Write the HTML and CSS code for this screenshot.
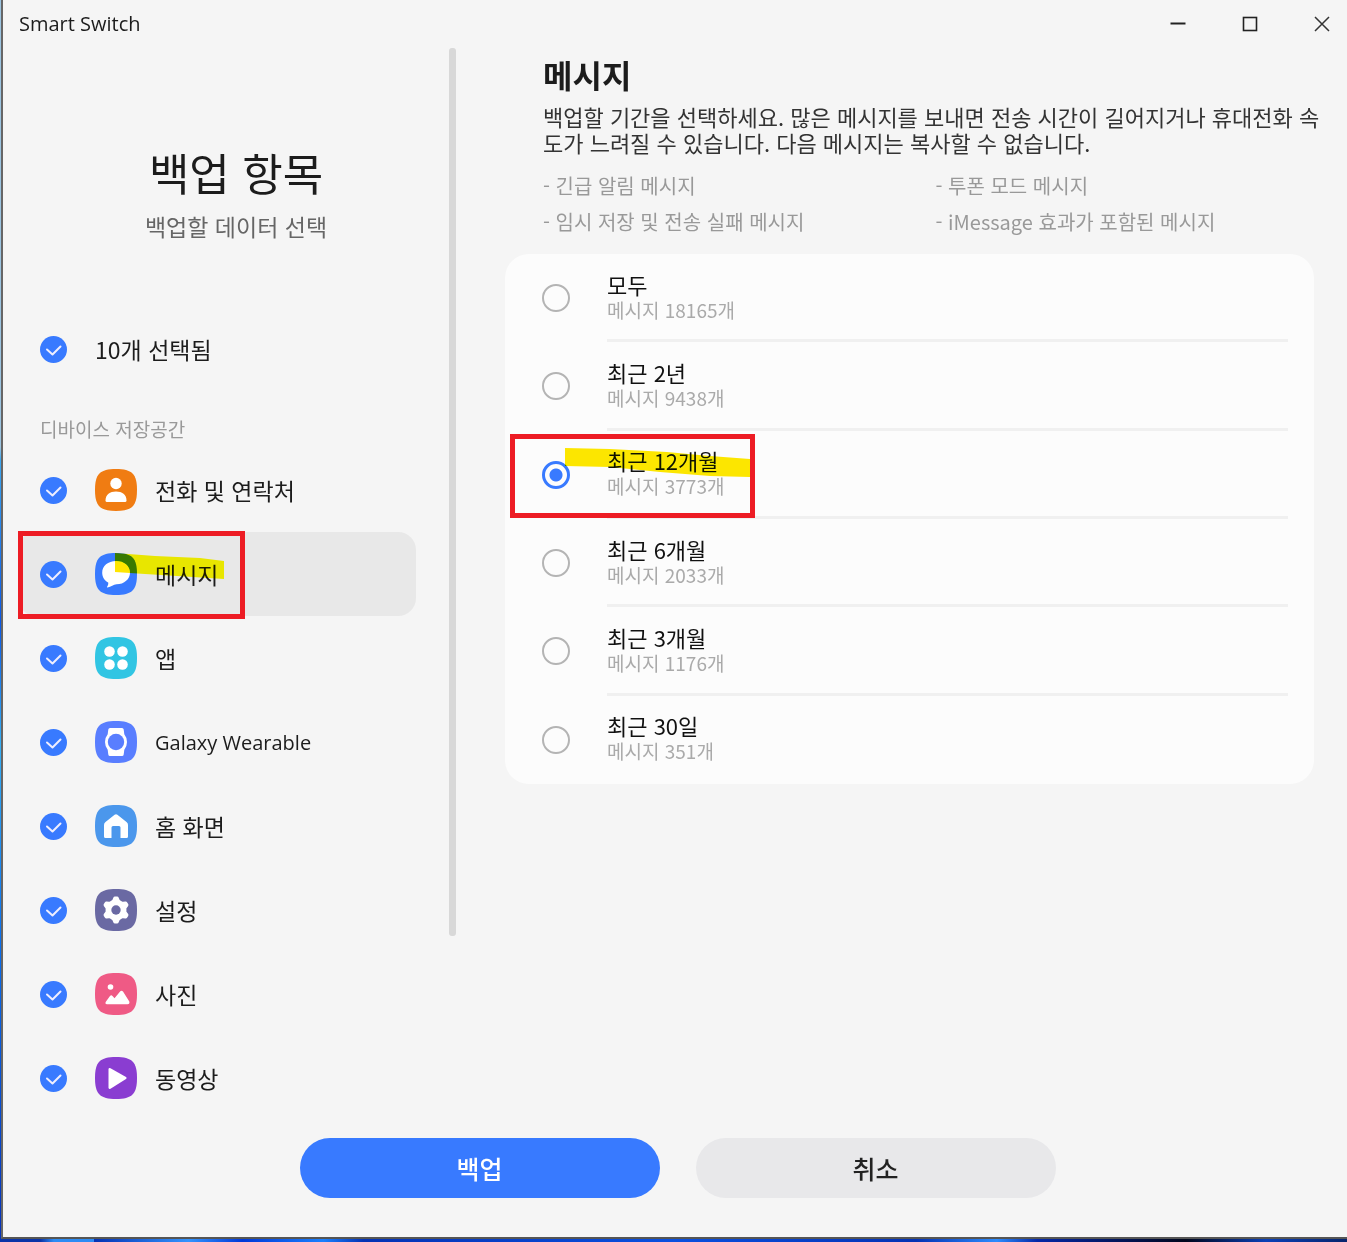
FILE: index.html
```html
<!DOCTYPE html>
<html lang="ko">
<head>
    <meta charset="UTF-8">
    <meta name="viewport" content="width=device-width, initial-scale=1.0">
    <title>Smart Switch</title>
    <link rel="stylesheet" href="styles.css">
</head>
<body>
    <div class="window">
        <header class="title-bar">
            <span class="app-name">Smart Switch</span>
            <div class="window-buttons">
                <button type="button" aria-label="최소화">
                    <svg width="16" height="16" viewBox="0 0 16 16"><path d="M0.5 7.5h15" stroke="#222" stroke-width="2"/></svg>
                </button>
                <button type="button" aria-label="최대화">
                    <svg width="16" height="16" viewBox="0 0 16 16"><rect x="1.5" y="1.5" width="13" height="13" fill="none" stroke="#222" stroke-width="1.6"/></svg>
                </button>
                <button type="button" aria-label="닫기">
                    <svg width="16" height="16" viewBox="0 0 16 16"><path d="M1 1l14 14M15 1L1 15" stroke="#333" stroke-width="1.5"/></svg>
                </button>
            </div>
        </header>

        <div class="content">
            <!-- Backup items -->
            <aside class="sidebar">
                <div class="sidebar-list">
                    <h1>백업 항목</h1>
                    <p class="subtitle">백업할 데이터 선택</p>

                    <label class="item select-all">
                        <input type="checkbox" checked>
                        <span>10개 선택됨</span>
                    </label>

                    <h3>디바이스 저장공간</h3>

                    <label class="item">
                        <input type="checkbox" checked>
                        <svg class="item-icon" viewBox="0 0 42 42">
                            <path class="contacts" d="M21 0C37 0 42 5 42 21S37 42 21 42 0 37 0 21 5 0 21 0Z"/>
                            <circle cx="21" cy="14.5" r="5.7" fill="#fff"/>
                            <path d="M10.5 31.5C10.5 25.500 15 22.500 21 22.500S31.500 25.500 31.500 31.500Q31.500 33 30 33H12Q10.500 33 10.500 31.500Z" fill="#fff"/>
                        </svg>
                        <span>전화 및 연락처</span>
                    </label>

                    <label class="item selected">
                        <input type="checkbox" checked>
                        <svg class="item-icon" viewBox="0 0 42 42">
                            <path class="messages" d="M21 0C37 0 42 5 42 21S37 42 21 42 0 37 0 21 5 0 21 0Z"/>
                            <path d="M21 8C29.200 8 35 12.900 35 19.500S29.200 31.300 21.500 31.300C18.500 31.500 16 33.800 12.500 34.500C12 34.600 11.800 34.200 12.100 33.800C13 32.500 13.500 31 13.200 29.600C9.500 27.500 7.200 24 7.200 19.800C7.200 13 13 8 21 8Z" fill="#fff"/>
                        </svg>
                        <span>메시지</span>
                        <svg class="marker marker-item" viewBox="0 0 109 27" aria-hidden="true"><path d="M0 0L40 3 85 5 109 8V26L62 23 30 21 0 19Z"/></svg>
                        <span class="red-box"></span>
                    </label>

                    <label class="item">
                        <input type="checkbox" checked>
                        <svg class="item-icon" viewBox="0 0 42 42">
                            <path class="apps" d="M21 0C37 0 42 5 42 21S37 42 21 42 0 37 0 21 5 0 21 0Z"/>
                            <g fill="#fff"><circle cx="14.500" cy="14.500" r="5.300"/><circle cx="27.500" cy="14.500" r="5.300"/><circle cx="14.500" cy="27.500" r="5.300"/><circle cx="27.500" cy="27.500" r="5.300"/></g>
                        </svg>
                        <span>앱</span>
                    </label>

                    <label class="item">
                        <input type="checkbox" checked>
                        <svg class="item-icon" viewBox="0 0 42 42">
                            <path class="wearable" d="M21 0C37 0 42 5 42 21S37 42 21 42 0 37 0 21 5 0 21 0Z"/>
                            <path d="M15 7H27Q28.500 7 28.700 8.500L29.300 13.200Q32 16.500 32 21T29.300 28.800L28.700 33.500Q28.500 35 27 35H15Q13.500 35 13.300 33.500L12.700 28.800Q10 25.500 10 21T12.700 13.200L13.300 8.500Q13.500 7 15 7Z" fill="#fff"/>
                            <circle class="wearable" cx="21" cy="21" r="8.200"/>
                        </svg>
                        <span class="latin">Galaxy Wearable</span>
                    </label>

                    <label class="item">
                        <input type="checkbox" checked>
                        <svg class="item-icon" viewBox="0 0 42 42">
                            <path class="home" d="M21 0C37 0 42 5 42 21S37 42 21 42 0 37 0 21 5 0 21 0Z"/>
                            <path d="M19.600 9.800Q21 8.700 22.400 9.800L31.500 17Q33 18.200 33 20V31.500Q33 33 31.500 33H25.500V22.500Q25.500 21 24 21H18Q16.500 21 16.500 22.500V33H10.500Q9 33 9 31.500V20Q9 18.200 10.500 17Z" fill="#fff"/>
                        </svg>
                        <span>홈 화면</span>
                    </label>

                    <label class="item">
                        <input type="checkbox" checked>
                        <svg class="item-icon" viewBox="0 0 42 42">
                            <path class="settings" d="M21 0C37 0 42 5 42 21S37 42 21 42 0 37 0 21 5 0 21 0Z"/>
                            <g fill="#fff">
                                <circle cx="21" cy="21" r="10.500"/>
                                <path id="tooth" d="M16.500 13L18.300 8.700Q18.700 7.500 20 7.500H22Q23.300 7.500 23.700 8.700L25.500 13Z"/>
                                <use href="#tooth" transform="rotate(60 21 21)"/>
                                <use href="#tooth" transform="rotate(120 21 21)"/>
                                <use href="#tooth" transform="rotate(180 21 21)"/>
                                <use href="#tooth" transform="rotate(240 21 21)"/>
                                <use href="#tooth" transform="rotate(300 21 21)"/>
                            </g>
                            <circle class="settings" cx="21" cy="21" r="4.700"/>
                        </svg>
                        <span>설정</span>
                    </label>

                    <label class="item">
                        <input type="checkbox" checked>
                        <svg class="item-icon" viewBox="0 0 42 42">
                            <path class="photos" d="M21 0C37 0 42 5 42 21S37 42 21 42 0 37 0 21 5 0 21 0Z"/>
                            <circle cx="15.500" cy="14" r="2.800" fill="#fff"/>
                            <path d="M11 28.500L15 23Q16.300 21.500 17.500 23L19.500 25.200L25.300 18.300Q26.600 17 28 18.500L34.300 28.500Q35 31 32.500 31.300H12Q9.500 31 11 28.500Z" fill="#fff"/>
                        </svg>
                        <span>사진</span>
                    </label>

                    <label class="item">
                        <input type="checkbox" checked>
                        <svg class="item-icon" viewBox="0 0 42 42">
                            <path class="videos" d="M21 0C37 0 42 5 42 21S37 42 21 42 0 37 0 21 5 0 21 0Z"/>
                            <path d="M15.500 11.300L31 20Q32.400 21 31 22L15.500 31.700Q13.500 32.500 13.500 30.500V12.500Q13.500 10.500 15.500 11.300Z" fill="#fff"/>
                        </svg>
                        <span>동영상</span>
                    </label>
                </div>
                <div class="scroll-thumb"></div>
            </aside>

            <!-- Message period -->
            <main class="detail">
                <div class="detail-text">
                    <h2>메시지</h2>
                    <p>백업할 기간을 선택하세요. 많은 메시지를 보내면 전송 시간이 길어지거나 휴대전화 속도가 느려질 수 있습니다. 다음 메시지는 복사할 수 없습니다.</p>
                    <ul class="excluded">
                        <li>- 긴급 알림 메시지</li>
                        <li>- 투폰 모드 메시지</li>
                        <li>- 임시 저장 및 전송 실패 메시지</li>
                        <li>- iMessage 효과가 포함된 메시지</li>
                    </ul>
                </div>

                <div class="options">
                    <label class="option">
                        <input type="radio" name="period">
                        <span class="option-text"><span class="name">모두</span><span class="count">메시지 18165개</span></span>
                    </label>
                    <label class="option">
                        <input type="radio" name="period">
                        <span class="option-text"><span class="name">최근 2년</span><span class="count">메시지 9438개</span></span>
                    </label>
                    <label class="option">
                        <input type="radio" name="period" checked>
                        <span class="option-text"><span class="name">최근 12개월</span><span class="count">메시지 3773개</span></span>
                        <svg class="marker marker-option" viewBox="0 0 185 30" aria-hidden="true"><path d="M0 0L45 1 102 4 145 8 185 11V29L145 28 95 24 45 19 0 18Z"/></svg>
                        <span class="red-box"></span>
                    </label>
                    <label class="option">
                        <input type="radio" name="period">
                        <span class="option-text"><span class="name">최근 6개월</span><span class="count">메시지 2033개</span></span>
                    </label>
                    <label class="option">
                        <input type="radio" name="period">
                        <span class="option-text"><span class="name">최근 3개월</span><span class="count">메시지 1176개</span></span>
                    </label>
                    <label class="option">
                        <input type="radio" name="period">
                        <span class="option-text"><span class="name">최근 30일</span><span class="count">메시지 351개</span></span>
                    </label>
                </div>
            </main>
        </div>

        <footer class="actions">
            <button type="button" class="primary">백업</button>
            <button type="button">취소</button>
        </footer>
    </div>
</body>
</html>
```
FILE: styles.css
```css
* {
    box-sizing: border-box;
}
body {
    margin: 0;
    min-height: 100vh;
    display: flex;
    padding: 0 0 3px 1px;
    font-family: "Noto Sans CJK KR", "Open Sans", sans-serif;
    font-size: 23px;
    color: #1c1c1c;
    /* desktop behind the window: bottom strip, then left strip */
    background:
        linear-gradient(90deg, #0a34a8 0 3%, #2c8cf5 4% 7%, #0432b4 7%, #3394ff 14%, #0038d8 18%, #1a80ff 24%, #0432b4 27%, #0a50e0 50%, #0432b4 68%, #2c8cff 74%, #0428a8 77%, #00061c 88%, #0a40b8 94%, #06246c) bottom / 100% 3px no-repeat,
        linear-gradient(#9cc4e0 36%, #3ea8f0 37%, #0a58e8 50%, #38b0f5 60%, #0a70f0 76%, #0430b8);
}
h1, h2, h3, p, ul {
    margin: 0;
    padding: 0;
    font-weight: 400;
}
button {
    font-family: inherit;
    border: 0;
    cursor: pointer;
}
.window {
    flex: 1;
    display: flex;
    flex-direction: column;
    background-color: #f5f5f5;
    border-left: 2px solid #666;
    border-bottom: 2px solid #555;
}

/* Title bar */
.title-bar {
    display: flex;
    justify-content: space-between;
    height: 48px;
    padding-left: 16px;
}
.app-name,
.latin {
    font-family: "Open Sans", sans-serif;
    font-size: 20px;
}
.app-name {
    line-height: 48px;
}
.window-buttons {
    display: flex;
    margin-right: -11px;
}
.window-buttons button {
    width: 72px;
    padding: 0;
    background: none;
}
.window-buttons svg {
    display: block;
    margin: auto;
}

.content {
    flex: 1;
    display: flex;
}

/* Sidebar */
.sidebar {
    display: flex;
    justify-content: space-between;
    flex: 0 0 453px;
}
.sidebar-list {
    width: 413px;
    padding: 94px 0 0 15px;
}
.sidebar h1 {
    padding-left: 38px;
    text-align: center;
    font-size: 44px;
    line-height: 60px;
}
.subtitle {
    padding-left: 38px;
    margin-top: 8px;
    text-align: center;
    line-height: 32px;
    color: #666;
}
.sidebar h3 {
    margin: 23px 22px 4px;
    font-size: 19px;
    line-height: 30px;
    color: #999;
}
.item {
    position: relative;
    display: flex;
    align-items: center;
    height: 84px;
    padding-left: 22px;
    border-radius: 18px;
}
.item.selected {
    background-color: #e8e8e8;
}
.select-all {
    margin-top: 65px;
}
.item input {
    appearance: none;
    flex: none;
    width: 27px;
    height: 27px;
    margin: 0 28px 0 0;
    border-radius: 50%;
    background: #387aff url("data:image/svg+xml,%3Csvg xmlns='http://www.w3.org/2000/svg' viewBox='0 0 27 27'%3E%3Cpath d='M7 13.500l5.500 5L20.500 10.500' fill='none' stroke='%23eef' stroke-width='2' stroke-linecap='round' stroke-linejoin='round'/%3E%3C/svg%3E");
}
.item-icon {
    width: 42px;
    height: 42px;
    margin-right: 18px;
}
.contacts { fill: #f07c12; }
.messages { fill: #387aff; }
.apps { fill: #31c5e3; }
.wearable { fill: #597eff; }
.home { fill: #4b97ec; }
.settings { fill: #6a69a3; }
.photos { fill: #ef5a85; }
.videos { fill: #8a3dd1; }
.scroll-thumb {
    width: 7px;
    height: 888px;
    border-radius: 3px;
    background-color: #d8d8d8;
}

/* Detail pane */
.detail {
    flex: 1;
    padding: 6px 33px 0 49px;
}
.detail-text {
    padding-left: 38px;
}
.detail h2 {
    font-size: 32px;
    font-weight: 700;
    line-height: 40px;
}
.detail p {
    margin: 9px -8px 0 0;
    font-size: 22px;
    line-height: 26px;
    color: #333;
}
.excluded {
    display: grid;
    grid-template-columns: 1fr 1fr;
    column-gap: 14px;
    margin: 13px 0 14px;
    list-style: none;
    font-size: 20px;
    line-height: 36px;
    color: #999;
}
.options {
    display: grid;
    grid-auto-rows: 1fr;
    min-height: 530px;
    border-radius: 24px;
    background-color: #fcfcfc;
}
.option {
    position: relative;
    display: flex;
    align-items: center;
    padding: 0 26px 0 37px;
}
.option input {
    appearance: none;
    flex: none;
    width: 28px;
    height: 28px;
    margin: 0 37px 0 0;
    border: 2px solid #b4b4b4;
    border-radius: 50%;
}
.option input:checked {
    border: 3px solid #387aff;
    background: radial-gradient(circle, #387aff 6px, transparent 7px);
}
.option-text {
    flex: 1;
    align-self: stretch;
    display: flex;
    flex-direction: column;
    justify-content: center;
    border-bottom: 3px solid #f0f0f0;
}
.option:last-child .option-text {
    border-bottom-color: transparent;
}
.name {
    font-size: 22px;
    line-height: 26px;
    color: #111;
}
.count {
    font-size: 19px;
    line-height: 26px;
    color: #aaa;
}

/* Marker strokes and red frames drawn over the rows */
.marker {
    position: absolute;
    fill: #ffe600;
    mix-blend-mode: darken;
}
.marker-item {
    left: 97px;
    top: 21px;
    width: 109px;
}
.marker-option {
    left: 60px;
    top: 17px;
    width: 185px;
}
.red-box {
    position: absolute;
    left: 0;
    top: -1px;
    width: 227px;
    height: 88px;
    border: 5px solid #ed1c24;
}
.option .red-box {
    left: 5px;
    top: 3px;
    width: 245px;
    height: 84px;
}

/* Bottom buttons */
.actions {
    display: flex;
    justify-content: center;
    gap: 36px;
    padding: 18px 0 39px 5px;
}
.actions button {
    width: 360px;
    height: 60px;
    border-radius: 30px;
    font-size: 25px;
    font-weight: 500;
    color: #222;
    background-color: #e8e8ea;
}
.actions .primary {
    color: #fff;
    background-color: #387aff;
}
```
